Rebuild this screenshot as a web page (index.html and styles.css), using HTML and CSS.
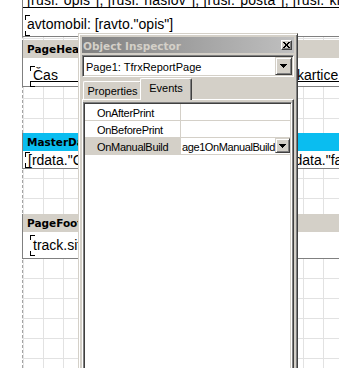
FILE: index.html
```html
<!DOCTYPE html>
<html lang="sl">
<head>
<meta charset="utf-8">
<title>Report designer</title>
<link rel="stylesheet" href="styles.css">
</head>
<body>
<div class="designer">
  <div class="gutter"></div>
  <div class="page">
    <section class="band band-data">
      <div class="band-body body-top">
        <div class="memo memo-line1">[rusl."opis"], [rusl."naslov"], [rusl."posta"], [rusl."kraj"]</div>
        <div class="memo memo-avto marked">avtomobil: [ravto."opis"]</div>
      </div>
    </section>
    <section class="band band-header">
      <div class="band-title">PageHeader1</div>
      <div class="band-body body-header">
        <div class="memo memo-cas marked">Čas</div>
        <div class="memo memo-kartice">kartice</div>
      </div>
    </section>
    <section class="band band-master">
      <div class="band-title">MasterData1</div>
      <div class="band-body body-master">
        <div class="memo memo-rdata marked">[rdata."CAS"]</div>
        <div class="memo memo-fakt">[rdata."faktura"]</div>
      </div>
    </section>
    <section class="band band-footer">
      <div class="band-title">PageFooter1</div>
      <div class="band-body body-footer">
        <div class="memo memo-track marked">track.sifra</div>
      </div>
    </section>
  </div>
</div>

<div class="inspector">
  <div class="titlebar">
    <span class="title">Object Inspector</span>
    <span class="close-btn">
      <svg width="7" height="6" viewBox="0 0 7 6" shape-rendering="crispEdges">
        <path fill="#000" d="M0 0h2v1H0zM5 0h2v1H5zM1 1h2v1H1zM4 1h2v1H4zM2 2h3v1H2zM2 3h3v1H2zM1 4h2v1H1zM4 4h2v1H4zM0 5h2v1H0zM5 5h2v1H5z"/>
      </svg>
    </span>
  </div>
  <div class="combo">
    <span class="combo-text">Page1: TfrxReportPage</span>
    <span class="dd-btn">
      <svg width="7" height="4" viewBox="0 0 7 4" shape-rendering="crispEdges">
        <path fill="#000" d="M0 0h7v1H0zM1 1h5v1H1zM2 2h3v1H2zM3 3h1v1H3z"/>
      </svg>
    </span>
  </div>
  <div class="tabs">
    <span class="tab">Properties</span>
    <span class="tab tab-active">Events</span>
  </div>
  <div class="tabpage">
    <div class="grid">
      <div class="row"><div class="name">OnAfterPrint</div><div class="value"></div></div>
      <div class="row"><div class="name">OnBeforePrint</div><div class="value"></div></div>
      <div class="row row-selected"><div class="name">OnManualBuild</div><div class="value"><span class="value-text">age1OnManualBuild</span><span class="dd-btn small">
        <svg width="7" height="4" viewBox="0 0 7 4" shape-rendering="crispEdges">
          <path fill="#000" d="M0 0h7v1H0zM1 1h5v1H1zM2 2h3v1H2zM3 3h1v1H3z"/>
        </svg>
      </span></div></div>
    </div>
  </div>
</div>
</body>
</html>
```

FILE: styles.css
```css
* { box-sizing: border-box; margin: 0; padding: 0; }
html, body { width: 339px; height: 368px; overflow: hidden; background: #fff; }
body { position: relative; font-family: "Liberation Sans", Arial, sans-serif; color: #000; }

.designer { display: flex; height: 368px; }
.gutter { flex: none; width: 22px; background: #fff; }
.page {
  flex: none;
  width: 330px;
  height: 368px;
  display: flex;
  flex-direction: column;
  border-left: 1px dashed #a4a4a4;
  background-color: #fff;
  background-image:
    linear-gradient(to right, #e2e2e2 1px, transparent 1px),
    linear-gradient(to bottom, #e2e2e2 1px, transparent 1px);
  background-size: 20px 20px;
  background-position: 0 18px;
}

/* bands */
.band { margin-left: -1px; border-left: 1px solid #808080; flex: none; }
.band-title {
  height: 18px;
  padding-left: 4px;
  background: #d4d0c8;
  font: bold 10.5px/18px "DejaVu Sans", Verdana, sans-serif;
  white-space: nowrap;
  overflow: hidden;
}
.band-master .band-title { background: #0abdf0; }
.band-body {
  background: #fff;
  border-bottom: 1px solid #808080;
  display: flex;
}
.band-header { margin-top: 3px; }
.band-master { margin-top: 46px; }
.band-footer { margin-top: 45px; }

.body-top { flex-direction: column; height: 37px; }
.body-header { height: 29px; align-items: flex-start; }
.body-master { height: 18px; align-items: flex-start; }
.body-footer { height: 27px; align-items: flex-start; }

/* memos */
.memo {
  position: relative;
  font-size: 14px;
  line-height: 16px;
  white-space: nowrap;
  flex: none;
}
.marked::before,
.marked::after {
  content: "";
  position: absolute;
  left: 0;
  width: 4px;
  height: 4px;
  border-left: 1px solid #000;
}
.marked::before { top: 0; border-top: 1px solid #000; }
.marked::after { bottom: 0; border-bottom: 1px solid #000; }

.memo-line1 {
  margin-top: -10px;
  height: 18px;
  padding: 2px 0 0 4px;
  border-bottom: 1px solid #000;
  letter-spacing: 0.2px;
}
.memo-avto {
  align-self: flex-start;
  margin: 7px 0 0 2px;
  height: 21px;
  padding: 1px 0 0 2px;
}
.memo-cas {
  margin: 8px 0 0 7px;
  width: 240px;
  height: 16px;
  padding: 1px 0 0 3px;
  border-bottom: 1px solid #000;
}
.memo-cas::after { bottom: -6px; }
.memo-kartice {
  flex: 1;
  margin: 8px 0 0 25px;
  height: 16px;
  padding: 1px 0 0 2px;
  border-bottom: 1px solid #000;
}
.memo-rdata {
  margin: 1px 0 0 2px;
  width: 200px;
  height: 16px;
  padding: 0 0 0 3px;
}
.memo-fakt {
  margin: 1px 0 0 60px;
  height: 16px;
  padding: 0 0 0 1px;
}
.memo-track {
  margin: 3px 0 0 7px;
  width: 200px;
  height: 21px;
  padding: 2px 0 0 3px;
}

/* object inspector */
.inspector {
  position: absolute;
  left: 78px;
  top: 33px;
  width: 220px;
  height: 345px;
  padding: 3px;
  display: flex;
  flex-direction: column;
  background: #d4d0c8;
  border: 1px solid;
  border-color: #d4d0c8 #404040 #404040 #d4d0c8;
  box-shadow: inset 1px 1px #fff, inset -1px -1px #808080;
  font-size: 11px;
}
.titlebar {
  flex: none;
  height: 16px;
  padding: 0 1px 0 1px;
  display: flex;
  align-items: center;
  justify-content: space-between;
  background: linear-gradient(to right, #808080, #c0c0c0);
}
.title {
  font: bold 10.5px/16px "DejaVu Sans", Verdana, sans-serif;
  color: #d4d0c8;
  padding-top: 1px;
  white-space: nowrap;
}
.close-btn {
  width: 11px;
  height: 10px;
  margin-right: 1px;
  display: flex;
  align-items: center;
  justify-content: center;
  background: #d4d0c8;
  border: 1px solid;
  border-color: #fff #404040 #404040 #fff;
  box-shadow: inset -1px -1px #808080;
}
.close-btn svg { display: block; }

.combo {
  flex: none;
  margin-top: 2px;
  height: 22px;
  display: flex;
  align-items: stretch;
  background: #fff;
  border: 1px solid;
  border-color: #808080 #fff #fff #808080;
  box-shadow: inset 1px 1px #404040, inset -1px -1px #d4d0c8;
  padding: 1px;
}
.combo-text {
  flex: 1;
  padding: 1px 0 0 2px;
  line-height: 18px;
  white-space: nowrap;
  overflow: hidden;
}
.dd-btn {
  flex: none;
  width: 17px;
  display: flex;
  align-items: center;
  justify-content: center;
  background: #d4d0c8;
  border: 1px solid;
  border-color: #d4d0c8 #404040 #404040 #d4d0c8;
  box-shadow: inset 1px 1px #fff, inset -1px -1px #808080;
}
.dd-btn svg { display: block; }

.tabs {
  flex: none;
  margin-top: 1px;
  height: 21px;
  display: flex;
  align-items: flex-end;
  padding-left: 1px;
  position: relative;
  z-index: 1;
}
.tab {
  height: 18px;
  width: 59px;
  text-align: center;
  padding-top: 3px;
  line-height: 13px;
  border: 1px solid;
  border-bottom: 0;
  border-color: #fff #404040 #fff #fff;
  box-shadow: inset -1px 0 #808080;
  border-radius: 2px 2px 0 0;
  background: #d4d0c8;
  white-space: nowrap;
}
.tab-active {
  width: 52px;
  height: 22px;
  margin: 0 0 -1px -2px;
  padding-top: 3px;
}

.tabpage {
  flex: 1;
  display: flex;
  flex-direction: column;
  border: 1px solid;
  border-color: #fff #404040 #404040 #fff;
  box-shadow: inset -1px -1px #808080;
  padding: 2px 1px 1px 0;
}
.grid {
  flex: 1;
  background: #fff;
  border: 1px solid;
  border-color: #808080 #fff #fff #808080;
  box-shadow: inset 1px 1px #404040, inset -1px -1px #d4d0c8;
  padding: 1px;
}
.row {
  height: 17px;
  display: flex;
  border-bottom: 1px solid #d4d0c8;
}
.name {
  flex: none;
  width: 96px;
  border-right: 1px solid #d4d0c8;
  padding: 3px 0 0 12px;
  line-height: 13px;
  white-space: nowrap;
  letter-spacing: -0.3px;
}
.value { flex: 1; display: flex; min-width: 0; }
.row-selected .name { background: #d4d0c8; }
.value-text {
  flex: 1;
  min-width: 0;
  overflow: hidden;
  white-space: nowrap;
  padding: 3px 0 0 1px;
  line-height: 13px;
  letter-spacing: -0.4px;
}
.dd-btn.small { width: 15px; height: 15px; }
```
